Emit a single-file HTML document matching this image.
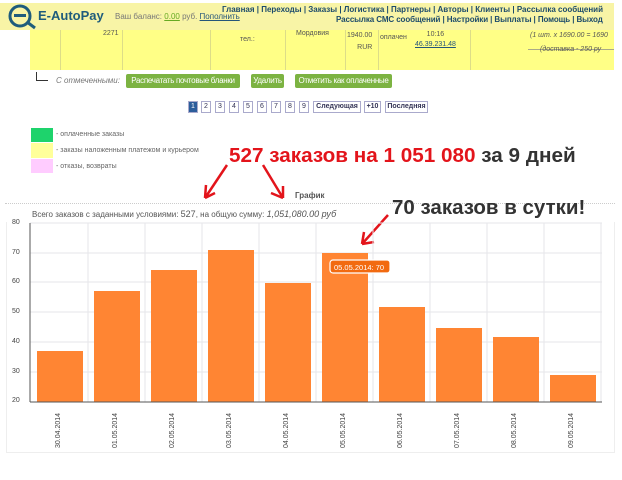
<!DOCTYPE html>
<html><head><meta charset="utf-8"><style>
*{margin:0;padding:0;box-sizing:border-box}
body{width:622px;height:480px;background:#fff;position:relative;overflow:hidden;font-family:"Liberation Sans","DejaVu Sans",sans-serif}
.a{position:absolute;white-space:nowrap}
.btn{position:absolute;top:74px;height:14px;background:#7cb342;color:#fff;font-size:8px;line-height:14px;text-align:center;border-radius:2px;overflow:hidden}
.pg{position:absolute;top:101px;height:12px;border:1px solid #aac;font-size:7px;line-height:10px;text-align:center;color:#335;background:#fff}
.nav{font-size:8px;font-weight:bold;color:#1d4b6b}
.lbl{position:absolute;font-size:7px;color:#444;transform:rotate(-90deg);transform-origin:left top;white-space:nowrap}
.yl{position:absolute;left:12px;font-size:7px;color:#444}
</style></head><body>
<div class="a" style="left:30px;top:28px;width:584px;height:42px;background:#ffff86"></div>
<div class="a" style="left:0;top:3px;width:614px;height:27px;background:#f8f4a6"></div>
<div class="a" style="left:60px;top:30px;width:1px;height:40px;background:#dd8"></div>
<div class="a" style="left:122px;top:30px;width:1px;height:40px;background:#dd8"></div>
<div class="a" style="left:210px;top:30px;width:1px;height:40px;background:#dd8"></div>
<div class="a" style="left:285px;top:30px;width:1px;height:40px;background:#dd8"></div>
<div class="a" style="left:345px;top:30px;width:1px;height:40px;background:#dd8"></div>
<div class="a" style="left:378px;top:30px;width:1px;height:40px;background:#dd8"></div>
<div class="a" style="left:470px;top:30px;width:1px;height:40px;background:#dd8"></div>
<div class="a" style="left:528px;top:49px;width:86px;height:1px;background:#aa8"></div>
<div class="a" style="left:103px;top:30px;font-size:7px;color:#555">2271</div>
<div class="a" style="left:240px;top:36px;font-size:7px;color:#555">тел.:</div>
<div class="a" style="left:296px;top:30px;font-size:7px;color:#555">Мордовия</div>
<div class="a" style="left:347px;top:30px;font-size:7px;color:#555;line-height:12px;text-align:right">1940.00<br>RUR</div>
<div class="a" style="left:380px;top:34px;font-size:7px;color:#555">оплачен</div>
<div class="a" style="left:415px;top:30px;font-size:7px;color:#555;line-height:10px;text-align:center">10:16<br><u style="color:#25557a">46.39.231.48</u></div>
<div class="a" style="left:530px;top:32px;font-size:7px;color:#555;font-style:italic">(1 шт. x 1690.00 = 1690</div>
<div class="a" style="left:540px;top:46px;font-size:7px;color:#555;font-style:italic">(доставка - 250 ру</div>
<svg class="a" style="left:8px;top:4px" width="30" height="26" viewBox="0 0 30 26"><circle cx="12" cy="12" r="10" fill="none" stroke="#1f5c7c" stroke-width="3"/><rect x="6" y="10" width="12" height="3" fill="#1f5c7c"/><path d="M19 18 L27 24" stroke="#1f5c7c" stroke-width="3"/></svg>
<div class="a" style="left:38px;top:8px;font-size:13px;font-weight:bold;color:#1f5c7c">E-AutoPay</div>
<div class="a" style="left:115px;top:12px;font-size:8px;color:#777">Ваш баланс: <u style="color:#6a2">0.00</u> руб. <u style="color:#25557a">Пополнить</u></div>
<div class="a nav" style="left:222px;top:5px;letter-spacing:0px">Главная | Переходы | Заказы | Логистика | Партнеры | Авторы | Клиенты | Рассылка сообщений</div>
<div class="a nav" style="left:336px;top:15px;letter-spacing:-0.1px">Рассылка СМС сообщений | Настройки | Выплаты | Помощь | Выход</div>
<div class="a" style="left:36px;top:72px;width:1px;height:8px;background:#333"></div>
<div class="a" style="left:36px;top:80px;width:12px;height:1px;background:#333"></div>
<div class="a" style="left:56px;top:76px;font-size:8px;color:#777;font-style:italic">С отмеченными:</div>
<div class="btn" style="left:126px;width:114px;letter-spacing:-0.3px">Распечатать почтовые бланки</div>
<div class="btn" style="left:251px;width:33px;letter-spacing:-0.3px">Удалить</div>
<div class="btn" style="left:295px;width:97px;letter-spacing:-0.3px">Отметить как оплаченные</div>
<div class="pg" style="left:188px;width:10px;background:#2c5d9b;color:#fff">1</div>
<div class="pg" style="left:201px;width:10px">2</div>
<div class="pg" style="left:215px;width:10px">3</div>
<div class="pg" style="left:229px;width:10px">4</div>
<div class="pg" style="left:243px;width:10px">5</div>
<div class="pg" style="left:257px;width:10px">6</div>
<div class="pg" style="left:271px;width:10px">7</div>
<div class="pg" style="left:285px;width:10px">8</div>
<div class="pg" style="left:299px;width:10px">9</div>
<div class="pg" style="left:313px;width:48px;font-weight:bold">Следующая</div>
<div class="pg" style="left:364px;width:17px;font-weight:bold">+10</div>
<div class="pg" style="left:385px;width:43px;font-weight:bold">Последняя</div>
<div class="a" style="left:31px;top:128px;width:22px;height:14px;background:#1ed36c"></div>
<div class="a" style="left:31px;top:143px;width:22px;height:15px;background:#ffff9a"></div>
<div class="a" style="left:31px;top:159px;width:22px;height:14px;background:#ffccff"></div>
<div class="a" style="left:56px;top:131px;font-size:7px;color:#666">- оплаченные заказы</div>
<div class="a" style="left:56px;top:147px;font-size:7px;color:#666">- заказы наложенным платежом и курьером</div>
<div class="a" style="left:56px;top:163px;font-size:7px;color:#666">- отказы, возвраты</div>
<div class="a" style="left:229px;top:144px;font-size:20.7px;font-weight:bold;color:#e3141b">527 заказов на 1 051 080 <span style="color:#333">за 9 дней</span></div>
<svg class="a" style="left:195px;top:160px" width="110" height="45"><g fill="none" stroke="#e3141b" stroke-width="2.5"><path d="M32 5 L10 38 M10 38 L11 25 M10 38 L20 33"/><path d="M68 5 L88 38 M88 38 L76 33 M88 38 L88 26"/></g></svg>
<div class="a" style="left:295px;top:191px;font-size:8px;font-weight:bold;color:#555">График</div>
<div class="a" style="left:5px;top:203px;width:610px;border-top:1px dotted #ccc"></div>
<div class="a" style="left:32px;top:209px;font-size:8px;color:#555">Всего заказов с заданными условиями: <span style="font-size:9px">527</span>, на общую сумму: <i style="font-size:9px">1,051,080.00 руб</i></div>
<div class="a" style="left:392px;top:196px;font-size:20.5px;font-weight:bold;color:#333">70 заказов в сутки!</div>
<svg class="a" style="left:350px;top:212px" width="45" height="38"><g fill="none" stroke="#e3141b" stroke-width="2.5"><path d="M38 3 L12 32 M12 32 L14 20 M12 32 L24 30"/></g></svg>
<div class="a" style="left:6px;top:222px;width:609px;height:231px;border:1px solid #eee;border-top:none"></div>
<svg class="a" style="left:0;top:0" width="622" height="480">
<g stroke="#e6e6ea" stroke-width="1">
<line x1="30" y1="223" x2="602" y2="223"/><line x1="30" y1="253" x2="602" y2="253"/><line x1="30" y1="282" x2="602" y2="282"/><line x1="30" y1="312" x2="602" y2="312"/><line x1="30" y1="342" x2="602" y2="342"/><line x1="30" y1="372" x2="602" y2="372"/>
<line x1="88" y1="223" x2="88" y2="402"/><line x1="145" y1="223" x2="145" y2="402"/><line x1="202" y1="223" x2="202" y2="402"/><line x1="259" y1="223" x2="259" y2="402"/><line x1="316" y1="223" x2="316" y2="402"/><line x1="373" y1="223" x2="373" y2="402"/><line x1="430" y1="223" x2="430" y2="402"/><line x1="487" y1="223" x2="487" y2="402"/><line x1="544" y1="223" x2="544" y2="402"/><line x1="601" y1="223" x2="601" y2="402"/>
</g>
<g fill="#ff8533">
<rect x="37" y="351" width="46" height="51"/>
<rect x="94" y="291" width="46" height="111"/>
<rect x="151" y="270" width="46" height="132"/>
<rect x="208" y="250" width="46" height="152"/>
<rect x="265" y="283" width="46" height="119"/>
<rect x="322" y="253" width="46" height="149"/>
<rect x="379" y="307" width="46" height="95"/>
<rect x="436" y="328" width="46" height="74"/>
<rect x="493" y="337" width="46" height="65"/>
<rect x="550" y="375" width="46" height="27"/>
</g>
<line x1="30" y1="223" x2="30" y2="402" stroke="#555"/>
<line x1="30" y1="402" x2="602" y2="402" stroke="#555"/>
<rect x="330" y="260" width="60" height="13" rx="3" fill="#f26a10" stroke="#fff" stroke-width="1.2"/>
<text x="334" y="270" font-size="7.5" fill="#fff" font-family="Liberation Sans">05.05.2014: 70</text>
</svg>
<div class="yl" style="top:219px">80</div><div class="yl" style="top:249px">70</div><div class="yl" style="top:278px">60</div><div class="yl" style="top:308px">50</div><div class="yl" style="top:338px">40</div><div class="yl" style="top:368px">30</div><div class="yl" style="top:397px">20</div>
<div class="lbl" style="left:55px;top:448px">30.04.2014</div>
<div class="lbl" style="left:112px;top:448px">01.05.2014</div>
<div class="lbl" style="left:169px;top:448px">02.05.2014</div>
<div class="lbl" style="left:226px;top:448px">03.05.2014</div>
<div class="lbl" style="left:283px;top:448px">04.05.2014</div>
<div class="lbl" style="left:340px;top:448px">05.05.2014</div>
<div class="lbl" style="left:397px;top:448px">06.05.2014</div>
<div class="lbl" style="left:454px;top:448px">07.05.2014</div>
<div class="lbl" style="left:511px;top:448px">08.05.2014</div>
<div class="lbl" style="left:568px;top:448px">09.05.2014</div>
</body></html>
